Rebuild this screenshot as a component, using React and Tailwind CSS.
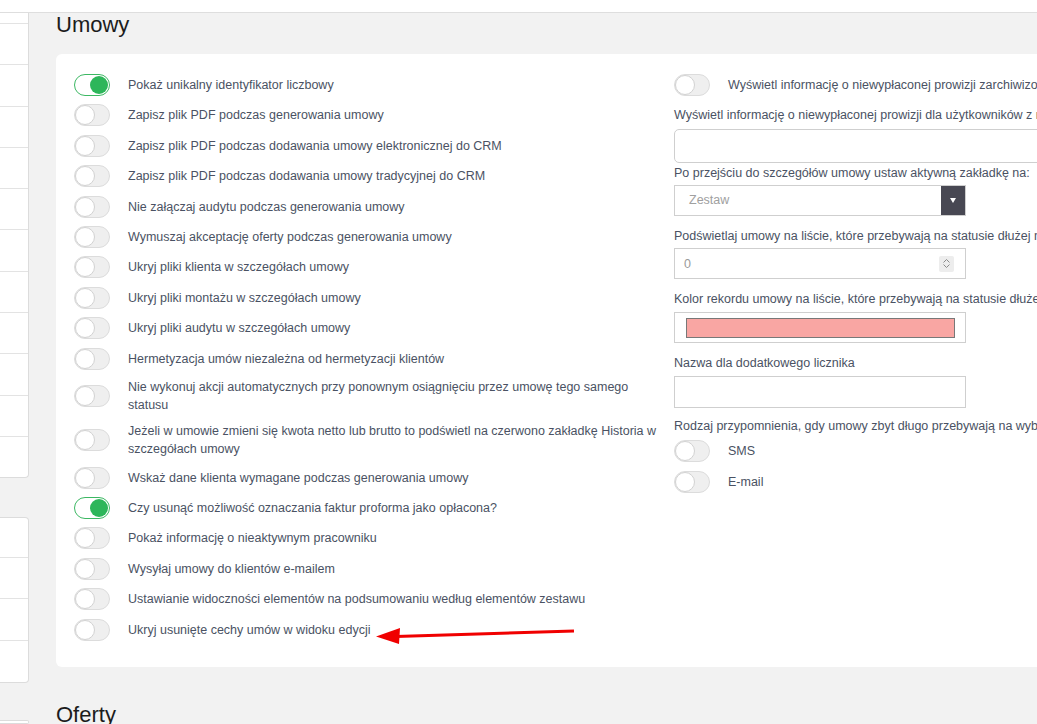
import React from "react";

function Toggle({ on }) {
  if (on) {
    return (
      <span className="flex items-center justify-end w-[36px] h-[22px] rounded-full border border-[#3cb863] bg-white shrink-0 pr-[1px]">
        <span className="block w-[18px] h-[18px] rounded-full bg-[#2db65a]" />
      </span>
    );
  }
  return (
    <span className="flex items-center justify-start w-[36px] h-[22px] rounded-full border border-[#dcdcdc] bg-[#efefef] shrink-0">
      <span className="block w-[20px] h-[20px] rounded-full bg-white border border-[#d2d2d2]" />
    </span>
  );
}

const leftItems = [
  { t: "Pokaż unikalny identyfikator liczbowy", on: true },
  { t: "Zapisz plik PDF podczas generowania umowy" },
  { t: "Zapisz plik PDF podczas dodawania umowy elektronicznej do CRM" },
  { t: "Zapisz plik PDF podczas dodawania umowy tradycyjnej do CRM" },
  { t: "Nie załączaj audytu podczas generowania umowy" },
  { t: "Wymuszaj akceptację oferty podczas generowania umowy" },
  { t: "Ukryj pliki klienta w szczegółach umowy" },
  { t: "Ukryj pliki montażu w szczegółach umowy" },
  { t: "Ukryj pliki audytu w szczegółach umowy" },
  { t: "Hermetyzacja umów niezależna od hermetyzacji klientów" },
  { t: "Nie wykonuj akcji automatycznych przy ponownym osiągnięciu przez umowę tego samego statusu" },
  { t: "Jeżeli w umowie zmieni się kwota netto lub brutto to podświetl na czerwono zakładkę Historia w szczegółach umowy" },
  { t: "Wskaż dane klienta wymagane podczas generowania umowy" },
  { t: "Czy usunąć możliwość oznaczania faktur proforma jako opłacona?", on: true },
  { t: "Pokaż informację o nieaktywnym pracowniku" },
  { t: "Wysyłaj umowy do klientów e-mailem" },
  { t: "Ustawianie widoczności elementów na podsumowaniu według elementów zestawu" },
  { t: "Ukryj usunięte cechy umów w widoku edycji" },
];

function SideRow({ h, last }) {
  return <div className={`${h} shrink-0 ${last ? "" : "border-b border-[#e3e3e3]"}`} />;
}

export default function App() {
  return (
    <div className="relative w-[1037px] h-[724px] overflow-hidden bg-[#f2f2f2] flex flex-col font-['Liberation_Sans',Arial,sans-serif] text-[12.5px] text-[#4a5263]">
      <div className="h-[13px] shrink-0 bg-white border-b border-[#dedede]" />
      <div className="flex flex-1 min-h-0">
        <aside className="w-[29px] shrink-0 flex flex-col">
          <div className="bg-white border-r border-b border-[#dcdcdc] rounded-br-[4px] flex flex-col">
            <SideRow h="h-[11px]" />
            {Array.from({ length: 10 }).map((_, i) => (
              <SideRow key={i} h="h-[41.3px]" />
            ))}
            <SideRow h="h-[40px]" last />
          </div>
          <div className="mt-[39px] bg-white border border-l-0 border-[#dcdcdc] rounded-r-[4px] flex flex-col">
            <SideRow h="h-[40px]" />
            <SideRow h="h-[41px]" />
            <SideRow h="h-[42px]" />
            <SideRow h="h-[41px]" last />
          </div>
          <div className="mt-[37px] bg-white border border-l-0 border-[#dcdcdc] rounded-r-[4px] h-[60px]" />
        </aside>
        <main className="pl-[27px] flex-1 min-w-0">
          <h2 className="text-[22px] leading-[22px] text-[#1c1c1c] h-[22px] mb-[18px] mt-[1px]">Umowy</h2>
          <div className="w-[1240px] h-[613px] bg-white rounded-[6px] pt-[20px] pl-[18px] flex gap-[10px]">
            <div className="w-[590px] shrink-0 flex flex-col">
              {leftItems.map((it, i) => (
                <div key={i} className="flex items-center gap-[18px] mb-[8.4px] min-h-[22px]">
                  <Toggle on={it.on} />
                  <span className="leading-[18px] w-[534px] shrink-0">{it.t}</span>
                </div>
              ))}
            </div>
            <div className="w-[560px] shrink-0 flex flex-col">
              <div className="flex items-center gap-[18px] h-[22px]">
                <Toggle />
                <span className="leading-[18px] whitespace-nowrap">Wyświetl informację o niewypłaconej prowizji zarchiwizowanych umów</span>
              </div>
              <div className="mt-[10px] leading-[18px] whitespace-nowrap">Wyświetl informację o niewypłaconej prowizji dla użytkowników z rolą</div>
              <div className="mt-[5px] h-[34px] border border-[#cfcfcf] rounded-[5px] bg-white" />
              <div className="mt-[1px] leading-[18px] whitespace-nowrap">Po przejściu do szczegółów umowy ustaw aktywną zakładkę na:</div>
              <div className="mt-[3px] w-[292px] h-[31px] border border-[#cfcfcf] flex items-stretch">
                <div className="flex-1 flex items-center pl-[14px] text-[#a0a0a0]">Zestaw</div>
                <div className="w-[24px] bg-[#484853] flex items-center justify-center">
                  <svg width="6" height="5" viewBox="0 0 6 5"><path d="M0 0 L6 0 L3 5 Z" fill="#ffffff" /></svg>
                </div>
              </div>
              <div className="mt-[11px] leading-[18px] whitespace-nowrap">Podświetlaj umowy na liście, które przebywają na statusie dłużej niż (dni)</div>
              <div className="mt-[3px] w-[292px] h-[31px] border border-[#cfcfcf] flex items-center justify-between pl-[9px] pr-[11px]">
                <span className="text-[#9a9a9a] pt-[1px]">0</span>
                <span className="w-[15px] h-[16px] bg-[#ededed] rounded-[2px] flex flex-col items-center justify-center gap-[1px]">
                  <svg width="7" height="4" viewBox="0 0 7 4"><path d="M0.5 3.5 L3.5 0.5 L6.5 3.5" stroke="#8a8a8a" fill="none" strokeWidth="1" /></svg>
                  <svg width="7" height="4" viewBox="0 0 7 4"><path d="M0.5 0.5 L3.5 3.5 L6.5 0.5" stroke="#8a8a8a" fill="none" strokeWidth="1" /></svg>
                </span>
              </div>
              <div className="mt-[11px] leading-[18px] whitespace-nowrap">Kolor rekordu umowy na liście, które przebywają na statusie dłużej niż wskazany czas</div>
              <div className="mt-[4px] w-[292px] h-[31px] border border-[#cfcfcf] flex items-center pl-[11px] pr-[10px]">
                <div className="flex-1 h-[20px] bg-[#f9a6a3] border border-[#787878]" />
              </div>
              <div className="mt-[11px] leading-[18px] whitespace-nowrap">Nazwa dla dodatkowego licznika</div>
              <div className="mt-[4px] w-[292px] h-[32px] border border-[#cfcfcf]" />
              <div className="mt-[9px] leading-[18px] whitespace-nowrap">Rodzaj przypomnienia, gdy umowy zbyt długo przebywają na wybranym statusie</div>
              <div className="mt-[5px] flex items-center gap-[18px] h-[22px]">
                <Toggle />
                <span>SMS</span>
              </div>
              <div className="mt-[9px] flex items-center gap-[18px] h-[22px]">
                <Toggle />
                <span>E-mail</span>
              </div>
            </div>
          </div>
          <h2 className="mt-[37px] text-[22px] leading-[22px] text-[#1c1c1c]">Oferty</h2>
        </main>
      </div>
      <svg className="absolute left-0 top-0 pointer-events-none" width="1037" height="724" viewBox="0 0 1037 724">
        <line x1="574" y1="631" x2="396" y2="636.5" stroke="#f00000" strokeWidth="3" />
        <path d="M376 636.5 L400 628 L399 644 Z" fill="#f00000" />
      </svg>
    </div>
  );
}
